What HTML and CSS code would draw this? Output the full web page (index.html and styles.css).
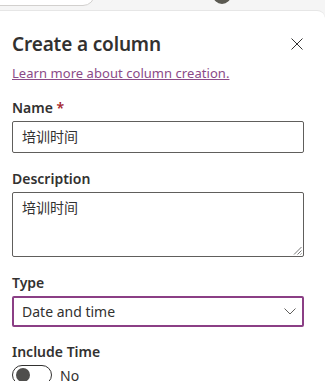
FILE: index.html
```html
<!DOCTYPE html>
<html>
<head>
<meta charset="utf-8">
<link rel="stylesheet" href="styles.css">
</head>
<body>
<div class="topbar">
  <div class="search"></div>
  <div class="avatar"></div>
</div>
<div class="panel">
  <div class="header">
    <h1 class="title">Create a column</h1>
    <svg class="close" width="12" height="12" viewBox="0 0 12 12"><path d="M0.5 0.5 L11.5 11.5 M11.5 0.5 L0.5 11.5" stroke="#323130" stroke-width="1" fill="none"/></svg>
  </div>
  <a class="learn" href="#">Learn more about column creation.</a>
  <div class="field">
    <label class="label">Name <span class="req">*</span></label>
    <div class="input">培训时间</div>
  </div>
  <div class="field">
    <label class="label">Description</label>
    <div class="textarea">培训时间
      <svg class="grip" width="9" height="9" viewBox="0 0 9 9"><path d="M8.5 1 L1 8.5 M8.5 4.5 L4.5 8.5 M8.5 7.5 L7.5 8.5" stroke="#777" stroke-width="1" fill="none"/></svg>
    </div>
  </div>
  <div class="field">
    <label class="label">Type</label>
    <div class="select">
      <span>Date and time</span>
      <svg class="chev" width="12" height="7" viewBox="0 0 12 7"><path d="M0.5 0.5 L6 6 L11.5 0.5" stroke="#605e5c" stroke-width="1" fill="none"/></svg>
    </div>
  </div>
  <div class="field field-tight">
    <label class="label">Include Time</label>
    <div class="toggle-row">
      <div class="toggle"><div class="knob"></div></div>
      <span class="toggle-text">No</span>
    </div>
  </div>
</div>
</body>
</html>
```
FILE: styles.css
```css
* { box-sizing: border-box; }
html, body { margin: 0; padding: 0; }
body {
  width: 325px;
  height: 381px;
  overflow: hidden;
  background: #f5f5f5;
  font-family: "Noto Sans", "Noto Sans CJK SC", sans-serif;
  color: #323130;
}
.topbar {
  height: 10px;
  position: relative;
}
.search {
  position: absolute;
  left: -20px;
  top: -30px;
  width: 115px;
  height: 36px;
  background: #fff;
  border: 1px solid #d2d0ce;
  border-radius: 12px;
}
.avatar {
  position: absolute;
  left: 213px;
  top: -14px;
  width: 18px;
  height: 18px;
  border-radius: 50%;
  background: #5b5a52;
}
.panel {
  background: #fff;
  border-top: 1px solid #e6e6e6;
  border-top-right-radius: 8px;
  height: 371px;
  padding: 19px 21px 0 12px;
}
.header {
  display: flex;
  justify-content: space-between;
  align-items: center;
  height: 28px;
}
.title {
  margin: 0;
  font-size: 19px;
  font-weight: 600;
  line-height: 28px;
  letter-spacing: -0.15px;
}
.close { margin-right: 1px; }
.learn {
  display: block;
  margin-top: 6px;
  font-size: 13px;
  line-height: 18px;
  letter-spacing: 0.05px;
  color: #8b4a88;
  text-decoration: underline;
}
.field { margin-top: 16px; }
.field-tight { margin-top: 15px; }
.label {
  display: block;
  font-size: 14px;
  font-weight: 600;
  line-height: 20px;
  margin-bottom: 3px;
}
.req { color: #a4262c; }
.input {
  height: 32px;
  border: 1px solid #605e5c;
  border-radius: 2px;
  padding: 0 9px;
  font-size: 14px;
  line-height: 30px;
}
.textarea {
  position: relative;
  height: 65px;
  border: 1px solid #605e5c;
  border-radius: 2px;
  padding: 5px 9px;
  font-size: 14px;
  line-height: 20px;
}
.grip { position: absolute; right: 1px; bottom: 1px; }
.select {
  height: 31px;
  border: 2px solid #8b3f85;
  border-radius: 2px;
  padding: 0 6px 0 8px;
  display: flex;
  align-items: center;
  justify-content: space-between;
  font-size: 14px;
}
.toggle-row {
  display: flex;
  align-items: center;
  gap: 8px;
  margin-top: 1px;
}
.toggle {
  width: 40px;
  height: 20px;
  border: 1px solid #323130;
  border-radius: 10px;
  padding: 0 3px;
  display: flex;
  align-items: center;
}
.knob {
  width: 14px;
  height: 14px;
  border-radius: 50%;
  background: #4f4e4c;
}
.toggle-text { font-size: 14px; }
```
